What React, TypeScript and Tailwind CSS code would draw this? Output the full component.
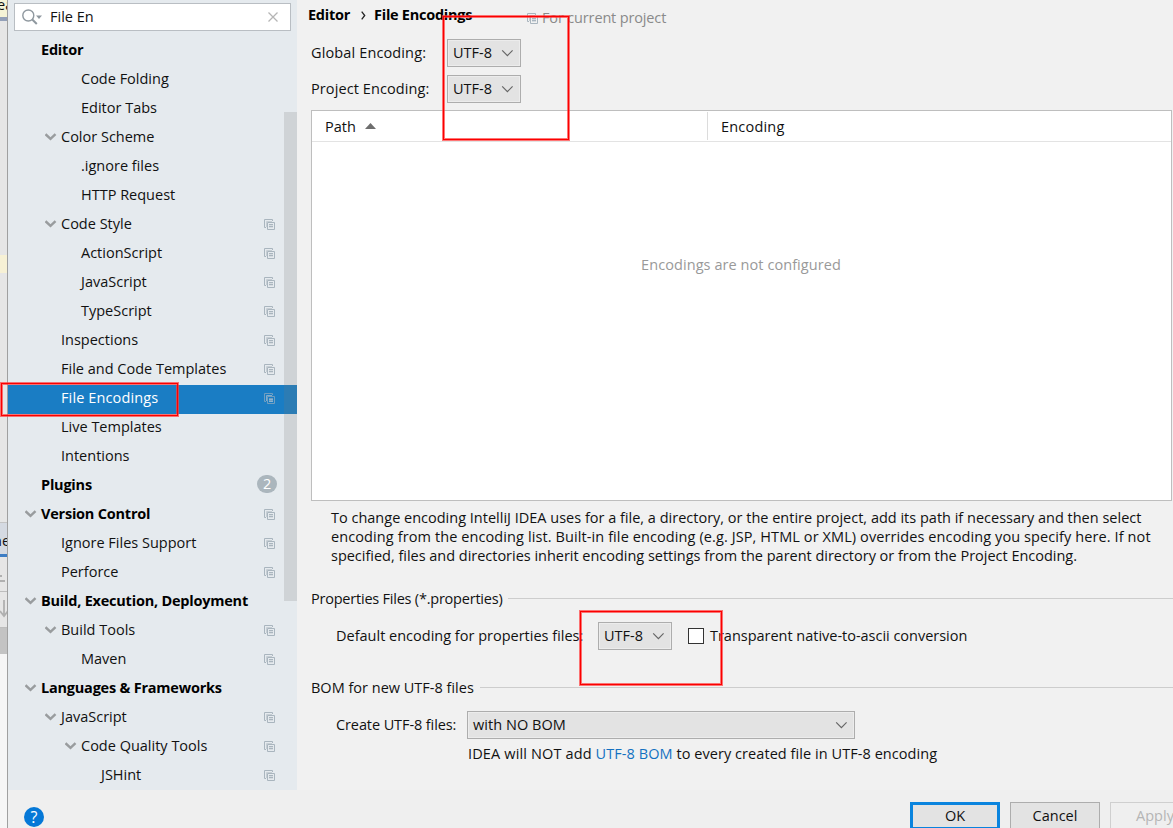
import type { ReactNode } from 'react'

type TreeItem = {
  label: string
  depth: 0 | 1 | 2 | 3
  open?: boolean
  bold?: boolean
  project?: boolean
  selected?: boolean
  badge?: string
}

const tree: TreeItem[] = [
  { label: 'Editor', depth: 0, bold: true },
  { label: 'Code Folding', depth: 2 },
  { label: 'Editor Tabs', depth: 2 },
  { label: 'Color Scheme', depth: 1, open: true },
  { label: '.ignore files', depth: 2 },
  { label: 'HTTP Request', depth: 2 },
  { label: 'Code Style', depth: 1, open: true, project: true },
  { label: 'ActionScript', depth: 2, project: true },
  { label: 'JavaScript', depth: 2, project: true },
  { label: 'TypeScript', depth: 2, project: true },
  { label: 'Inspections', depth: 1, project: true },
  { label: 'File and Code Templates', depth: 1, project: true },
  { label: 'File Encodings', depth: 1, project: true, selected: true },
  { label: 'Live Templates', depth: 1 },
  { label: 'Intentions', depth: 1 },
  { label: 'Plugins', depth: 0, bold: true, badge: '2' },
  { label: 'Version Control', depth: 0, bold: true, open: true, project: true },
  { label: 'Ignore Files Support', depth: 1, project: true },
  { label: 'Perforce', depth: 1, project: true },
  { label: 'Build, Execution, Deployment', depth: 0, bold: true, open: true },
  { label: 'Build Tools', depth: 1, open: true, project: true },
  { label: 'Maven', depth: 2, project: true },
  { label: 'Languages & Frameworks', depth: 0, bold: true, open: true },
  { label: 'JavaScript', depth: 1, open: true, project: true },
  { label: 'Code Quality Tools', depth: 2, open: true, project: true },
  { label: 'JSHint', depth: 3, project: true },
]

const indents = ['pl-[14px]', 'pl-[34px]', 'pl-[54px]', 'pl-[74px]'] as const

function CopyIcon() {
  return (
    <svg width="11" height="11" viewBox="0 0 11 11" fill="none" className="shrink-0">
      <path d="M2 8.500H.5v-8h8V2" stroke="#a9b5be" />
      <path d="M2.500 8V2.500H8" stroke="#c6ced4" />
      <path d="M3.500 3.500h7v7h-7z" stroke="#a9b5be" />
      <path d="M5 5.500h4M5 7.500h4" stroke="#a9b5be" />
      <path d="M5 6.500h4M5 8.500h4" stroke="#d5dbe0" />
    </svg>
  )
}

function TreeArrow() {
  return (
    <svg width="12" height="8" viewBox="0 0 12 8" fill="none">
      <path d="M.5 1.200l5 4.600 5-4.600" stroke="#999c9e" strokeWidth="2.500" />
    </svg>
  )
}

function Combo({ value, className }: { value: string; className: string }) {
  return (
    <div
      className={`flex h-7 shrink-0 items-center justify-between border border-[#adadad] bg-[#e3e3e3] pl-[5px] pr-[7px] shadow-[inset_0_0_0_1px_#ececec] ${className}`}
    >
      <span>{value}</span>
      <svg width="12" height="8" viewBox="0 0 12 8" fill="none">
        <path d="M1.200 1.400L6.400 6.600 11.600 1.400" stroke="#666" strokeWidth="1.200" />
      </svg>
    </div>
  )
}

function Separator({ title, className }: { title: string; className?: string }) {
  return (
    <div className="flex h-5 items-center gap-[6px]">
      <span className={`pt-[2px] ${className ?? ''}`}>{title}</span>
      <div className="h-px flex-1 bg-[#cdcdcd]" />
    </div>
  )
}

function Highlight({ className }: { className: string }) {
  return (
    <div className={`pointer-events-none absolute border border-[#ff3c3c]/70 ${className}`}>
      <div className="h-full w-full border border-[#fb0000] shadow-[inset_0_0_0_1px_#ff3c3cb3]" />
    </div>
  )
}

function Button({ children, className }: { children: ReactNode; className: string }) {
  return (
    <div className={`flex h-[28px] w-[90px] shrink-0 items-center justify-center ${className}`}>
      {children}
    </div>
  )
}

function Backdrop() {
  return (
    <div className="flex w-[8px] shrink-0 flex-col overflow-hidden border-r border-[#a0a0a0] bg-[#e6e6e6]">
      <div className="h-[17px] bg-[#f5f3d6] leading-[10px]">
        <span className="-ml-[3px]">ea</span>
      </div>
      <div className="h-1 shrink-0 bg-[#93a0b8]" />
      <div className="h-[234px] shrink-0" />
      <div className="h-[18px] shrink-0 bg-[#f7f1d5]" />
      <div className="h-[250px] shrink-0 border-b border-[#c4c4c4]" />
      <div className="h-[31px] shrink-0 bg-[#d5dae2] leading-9">
        <span className="-ml-[7px]">ne</span>
      </div>
      <div className="h-[3px] shrink-0 bg-[#3d7dc4]" />
      <svg width="7" height="71" viewBox="0 0 7 71" fill="none" className="shrink-0">
        <path d="M0 19h2M0 24h5M4 43v16M0 54l4 5 4-5" stroke="#b0b0b0" strokeWidth="1.800" />
        <path d="M0 34.500h7M0 70.500h7" stroke="#bdbdbd" />
      </svg>
      <div className="h-[26px] shrink-0 bg-[#c3c3c3]" />
      <div className="flex-1 bg-[#f6f6f6]" />
    </div>
  )
}

function Sidebar() {
  return (
    <aside className="relative h-[790px] w-[289px] shrink-0 overflow-hidden bg-[#e5eaee]">
      <div className="ml-[6px] mt-[3px] flex h-7 w-[277px] items-center border border-[#b9bec3] bg-white pl-[7px]">
        <svg width="20" height="16" viewBox="0 0 20 16" fill="none">
          <circle cx="6.300" cy="6.500" r="5.500" stroke="#8f989f" strokeWidth="1.400" />
          <path d="M10.300 10.500l4.500 4.500" stroke="#8f989f" strokeWidth="2" />
          <path d="M14 6.500h6l-3 3.500z" fill="#8f989f" />
        </svg>
        <span className="ml-[8px] flex-1">File En</span>
        <svg width="10" height="10" viewBox="0 0 10 10" className="mr-[12px]">
          <path d="M.5.5l9 9M9.500.5l-9 9" stroke="#b5b5b5" strokeWidth="1.300" />
        </svg>
      </div>
      <ul className="mt-[6px]">
        {tree.map((item, index) => (
          <li
            key={index}
            className={`flex h-[29px] items-center pb-[3px] ${indents[item.depth]} ${
              item.selected ? 'bg-[#1a7dc4] tracking-[0.12px] text-white' : ''
            } ${item.bold ? 'font-bold tracking-[-0.22px] text-black' : ''}`}
          >
            <span className="w-[19px] pl-[3px]">{item.open && <TreeArrow />}</span>
            <span className="flex-1 whitespace-nowrap">{item.label}</span>
            {item.project && (
              <span className={`mr-[22px] ${item.selected ? 'opacity-60' : ''}`}>
                <CopyIcon />
              </span>
            )}
            {item.badge && (
              <span className="mb-[3px] mr-5 flex h-[18px] w-5 items-center justify-center rounded-full bg-[#abb6bd] font-normal text-white">
                {item.badge}
              </span>
            )}
          </li>
        ))}
      </ul>
      <div className="absolute right-0 top-[112px] h-[489px] w-[13px] bg-[#787878]/20" />
    </aside>
  )
}

function Settings() {
  return (
    <main className="flex h-[790px] min-w-0 flex-1 flex-col bg-[#f1f1f1] pl-[14px]">
      <div className="-ml-[3px] flex h-[34px] items-start">
        <div className="flex w-[219px] items-center pt-[5px] font-bold tracking-[-0.26px] text-black">
          <span>Editor</span>
          <svg width="5" height="9" viewBox="0 0 5 9" fill="none" className="ml-[11px] mr-[8px]">
            <path d="M.7.7l3 3.800-3 3.800" stroke="#222" strokeWidth="1.300" />
          </svg>
          <span>File Encodings</span>
        </div>
        <div className="flex items-center gap-1 pt-[8px] tracking-[-0.15px] text-[#8a8a8a]">
          <CopyIcon />
          <span>For current project</span>
        </div>
      </div>

      <div className="mt-[5px] flex h-7 items-center">
        <span className="w-[136px] tracking-[0.13px]">Global Encoding:</span>
        <Combo value="UTF-8" className="w-[74px]" />
      </div>
      <div className="mt-2 flex h-7 items-center">
        <span className="w-[136px] tracking-[0.1px]">Project Encoding:</span>
        <Combo value="UTF-8" className="w-[74px]" />
      </div>

      <div className="mr-px mt-[7px] flex h-[391px] flex-col border border-[#bebebe] bg-white">
        <div className="flex h-[31px] items-center border-b border-[#e3e3e3]">
          <div className="flex w-[395px] items-center gap-[9px] pl-[13px]">
            <span className="pt-[2px]">Path</span>
            <svg width="11" height="6" viewBox="0 0 11 6">
              <path d="M0 6l5.500-6L11 6z" fill="#6e6e6e" />
            </svg>
          </div>
          <div className="flex h-7 flex-1 items-center border-l border-[#dcdcdc] pl-[13px] pt-[2px] tracking-[0.2px]">
            Encoding
          </div>
        </div>
        <div className="pr-px pt-[113px] text-center leading-5 tracking-[0.07px] text-[#999]">
          Encodings are not configured
        </div>
      </div>

      <p className="mt-[7px] whitespace-nowrap pl-5 leading-[19px]">
        To change encoding IntelliJ IDEA uses for a file, a directory, or the entire project, add its path if necessary and then select
        <br />
        <span className="tracking-[0.1px]">
          encoding from the encoding list. Built-in file encoding (e.g. JSP, HTML or XML) overrides encoding you specify here. If not
        </span>
        <br />
        <span className="tracking-[-0.02px]">
          specified, files and directories inherit encoding settings from the parent directory or from the Project Encoding.
        </span>
      </p>

      <div className="mt-[23px]">
        <Separator title="Properties Files (*.properties)" className="tracking-[-0.22px]" />
      </div>
      <div className="mt-[14px] flex h-7 items-center pl-[25px]">
        <span className="w-[262px] whitespace-nowrap">Default encoding for properties files:</span>
        <Combo value="UTF-8" className="w-[74px]" />
        <div className="ml-4 mr-[6px] h-4 w-4 border border-[#333] bg-white" />
        <span className="whitespace-nowrap tracking-[-0.02px]">Transparent native-to-ascii conversion</span>
      </div>

      <div className="mt-[27px]">
        <Separator title="BOM for new UTF-8 files" />
      </div>
      <div className="mt-[14px] flex h-7 items-center pl-[25px]">
        <span className="w-[131px] tracking-[-0.1px]">Create UTF-8 files:</span>
        <Combo value="with NO BOM" className="w-[388px] tracking-[0.04px]" />
      </div>
      <p className="mt-[5px] pl-[157px] leading-5 tracking-[0.06px]">
        <span className="tracking-[0.14px]">IDEA will NOT add </span>
        <span className="text-[#1471c1]">UTF-8 BOM</span> to every created file in UTF-8 encoding
      </p>
    </main>
  )
}

export default function App() {
  return (
    <div className="relative flex h-[828px] w-[1173px] overflow-hidden bg-[#f0f0f0] font-['Open_Sans','Noto_Sans',sans-serif] text-[14.5px] leading-5 text-[#111]">
      <Backdrop />
      <div className="flex min-w-0 flex-1 flex-col">
        <div className="flex">
          <Sidebar />
          <Settings />
        </div>
        <footer className="flex h-[38px] items-start justify-between overflow-hidden bg-[#efefef] pl-4">
          <div className="mt-[17px] flex h-5 w-5 items-center justify-center rounded-full bg-[#0578d7] text-base text-white">
            ?
          </div>
          <div className="-mr-[27px] mt-3 flex gap-[10px]">
            <Button className="border-[3px] border-[#0a84de] bg-[#e3e3e3]">OK</Button>
            <Button className="border border-[#adadad] bg-[#e3e3e3]">Cancel</Button>
            <Button className="border border-[#cfcfcf] bg-[#efefef] text-[#b5b5b5]">Apply</Button>
          </div>
        </footer>
      </div>

      <Highlight className="left-[442px] top-[15px] h-[126px] w-[128px]" />
      <Highlight className="left-0 top-[382px] h-[35px] w-[179px]" />
      <Highlight className="left-[579px] top-[610px] h-[76px] w-[144px]" />
    </div>
  )
}
